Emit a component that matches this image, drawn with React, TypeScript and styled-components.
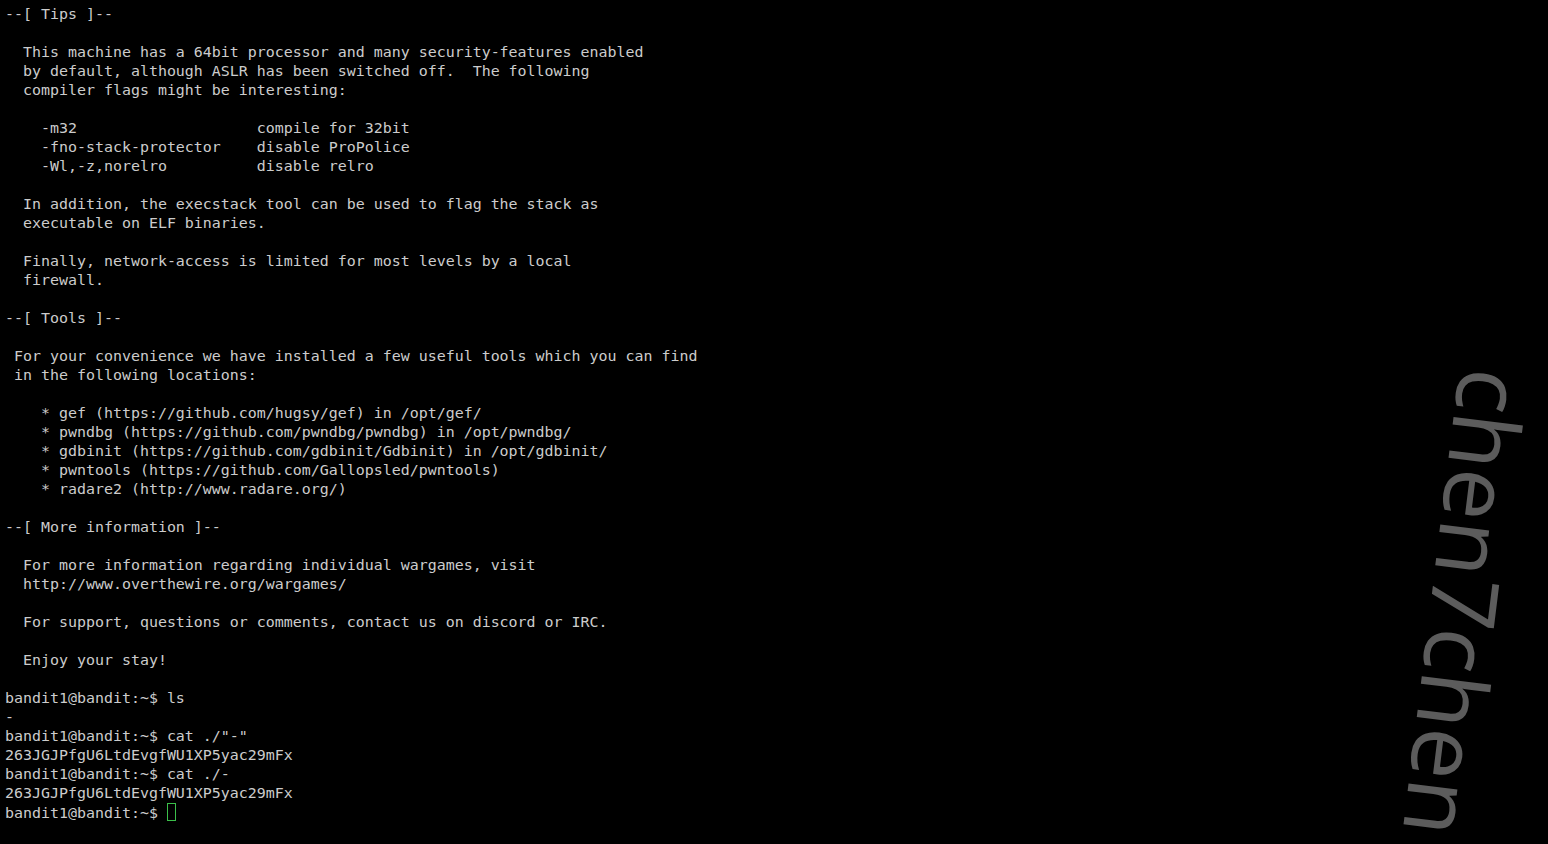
import React from "react";
import styled, { createGlobalStyle } from "styled-components";

const GlobalStyle = createGlobalStyle`
  html, body {
    margin: 0;
    padding: 0;
    background: #000000;
    overflow: hidden;
  }
  #root {
    min-height: 844px;
  }
`;

const Screen = styled.div`
  position: relative;
  width: 1548px;
  height: 844px;
  background: #000000;
  overflow: hidden;
`;

const Terminal = styled.div`
  display: flex;
  flex-direction: column;
  padding: 5px 5px 0 5px;
  font-family: "DejaVu Sans Mono", "Liberation Mono", monospace;
  font-size: 14.94px;
  line-height: 19px;
  color: #cccccc;
`;

const Line = styled.div`
  white-space: pre;
  height: 19px;
`;

const Cursor = styled.span`
  display: inline-block;
  width: 7px;
  height: 16px;
  border: 1px solid #3bbf4a;
  vertical-align: -3px;
`;

const Watermark = styled.div`
  position: absolute;
  left: 1466px;
  top: 603px;
  transform: translate(-50%, -50%) rotate(97deg);
  font-family: "Open Sans", "Noto Sans", sans-serif;
  font-size: 92px;
  font-weight: 500;
  line-height: 1;
  color: #5c5c5c;
  white-space: nowrap;
  pointer-events: none;
`;

const lines: string[] = [
  "--[ Tips ]--",
  "",
  "  This machine has a 64bit processor and many security-features enabled",
  "  by default, although ASLR has been switched off.  The following",
  "  compiler flags might be interesting:",
  "",
  "    -m32                    compile for 32bit",
  "    -fno-stack-protector    disable ProPolice",
  "    -Wl,-z,norelro          disable relro",
  "",
  "  In addition, the execstack tool can be used to flag the stack as",
  "  executable on ELF binaries.",
  "",
  "  Finally, network-access is limited for most levels by a local",
  "  firewall.",
  "",
  "--[ Tools ]--",
  "",
  " For your convenience we have installed a few useful tools which you can find",
  " in the following locations:",
  "",
  "    * gef (https://github.com/hugsy/gef) in /opt/gef/",
  "    * pwndbg (https://github.com/pwndbg/pwndbg) in /opt/pwndbg/",
  "    * gdbinit (https://github.com/gdbinit/Gdbinit) in /opt/gdbinit/",
  "    * pwntools (https://github.com/Gallopsled/pwntools)",
  "    * radare2 (http://www.radare.org/)",
  "",
  "--[ More information ]--",
  "",
  "  For more information regarding individual wargames, visit",
  "  http://www.overthewire.org/wargames/",
  "",
  "  For support, questions or comments, contact us on discord or IRC.",
  "",
  "  Enjoy your stay!",
  "",
  "bandit1@bandit:~$ ls",
  "-",
  'bandit1@bandit:~$ cat ./"-"',
  "263JGJPfgU6LtdEvgfWU1XP5yac29mFx",
  "bandit1@bandit:~$ cat ./-",
  "263JGJPfgU6LtdEvgfWU1XP5yac29mFx",
];

export default function App() {
  return (
    <>
      <GlobalStyle />
      <Screen>
        <Terminal>
          {lines.map((l, i) => (
            <Line key={i}>{l}</Line>
          ))}
          <Line>
            {"bandit1@bandit:~$ "}
            <Cursor />
          </Line>
        </Terminal>
        <Watermark>chen7chen</Watermark>
      </Screen>
    </>
  );
}
